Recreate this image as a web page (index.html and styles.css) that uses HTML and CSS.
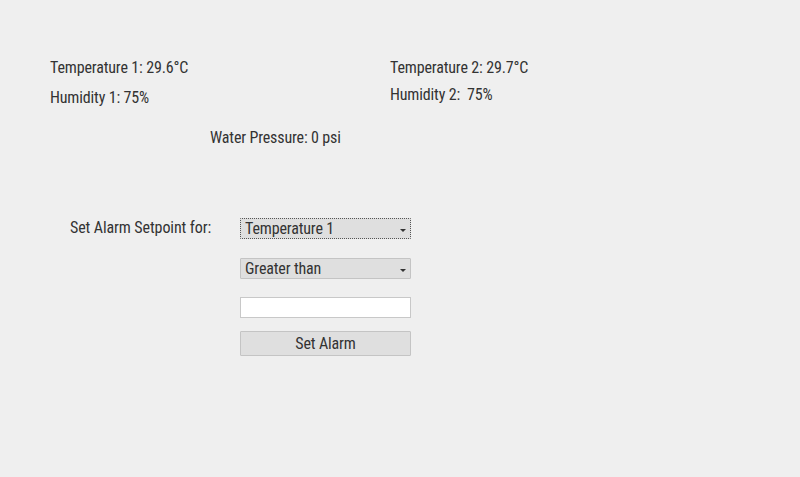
FILE: index.html
```html
<!DOCTYPE html>
<html lang="en">
<head>
  <meta charset="UTF-8">
  <meta name="viewport" content="width=device-width, initial-scale=1.0">
  <title>Sensor Monitor</title>
  <link rel="stylesheet" href="styles.css">
</head>
<body>

  <div class="readings">
    <div class="col col-1">
      <p>Temperature 1: 29.6°C</p>
      <p>Humidity 1: 75%</p>
    </div>
    <div class="col col-2">
      <p>Temperature 2: 29.7°C</p>
      <p>Humidity 2:&nbsp; 75%</p>
    </div>
  </div>

  <p class="pressure">Water Pressure: 0 psi</p>

  <!-- Alarm setpoint form -->
  <form class="alarm">
    <label for="sensor">Set Alarm Setpoint for:</label>
    <div class="fields">
      <span class="select focused">
        <select id="sensor">
          <option>Temperature 1</option>
          <option>Temperature 2</option>
          <option>Humidity 1</option>
          <option>Humidity 2</option>
          <option>Water Pressure</option>
        </select>
      </span>
      <span class="select">
        <select id="condition">
          <option>Greater than</option>
          <option>Less than</option>
        </select>
      </span>
      <input type="text" id="value">
      <button type="button">Set Alarm</button>
    </div>
  </form>

</body>
</html>
```

FILE: styles.css
```css
* {
  box-sizing: border-box;
  margin: 0;
  padding: 0;
}
body {
  font-family: Roboto, "Liberation Sans", sans-serif;
  font-size: 16px;
  font-stretch: 75%;
  letter-spacing: -0.15px;
  color: #333;
  background-color: #efefef;
  height: 100vh;
  padding: 58px 0 0 50px;
}
.readings {
  display: flex;
}
.col {
  display: flex;
  flex-direction: column;
  line-height: 20px;
}
.col-1 {
  width: 340px;
  gap: 10px;
}
.col-2 {
  gap: 7px;
}
.pressure {
  margin: 20px 0 0 160px;
  line-height: 20px;
}
.alarm {
  display: flex;
  margin: 70px 0 0 20px;
}
.alarm label {
  width: 170px;
  line-height: 20px;
  letter-spacing: -0.1px;
}
.fields {
  display: flex;
  flex-direction: column;
  width: 171px;
}
.select {
  position: relative;
  display: block;
  height: 21px;
  margin-bottom: 19px;
}
.select + .select {
  margin-bottom: 18px;
}
.select select {
  appearance: none;
  width: 100%;
  height: 100%;
  font: inherit;
  letter-spacing: inherit;
  color: #333;
  background-color: #dfdfdf;
  border: 1px solid #c4c4c4;
  border-radius: 1px;
  padding: 0 0 0 4px;
  outline: none;
}
.select.focused select {
  border: 1px dotted #555;
}
.select::after {
  content: "";
  position: absolute;
  right: 5px;
  top: 11px;
  border-left: 3px solid transparent;
  border-right: 3px solid transparent;
  border-top: 3px solid #333;
}
.fields input {
  height: 21px;
  border: 1px solid #c8c8c8;
  background-color: #fff;
  margin-bottom: 13px;
}
.fields button {
  height: 25px;
  font: inherit;
  letter-spacing: inherit;
  color: #333;
  background-color: #dfdfdf;
  border: 1px solid #c4c4c4;
  border-radius: 1px;
  cursor: pointer;
}
```
